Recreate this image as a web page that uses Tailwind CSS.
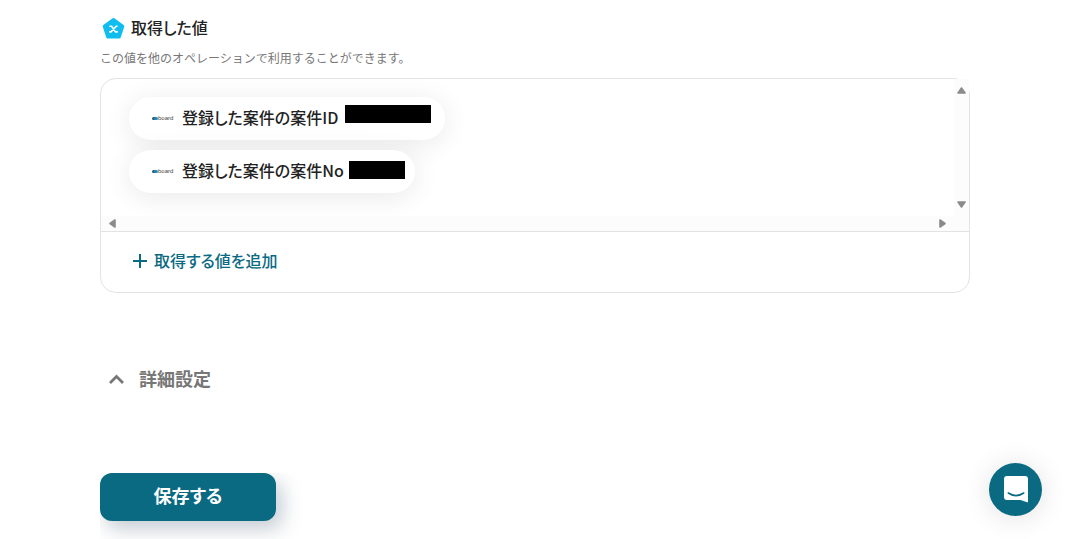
<!DOCTYPE html>
<html lang="ja">
  <head>
    <meta charset="UTF-8" />
    <meta name="viewport" content="width=device-width, initial-scale=1.0" />
    <title>取得した値</title>
    <script src="https://cdn.jsdelivr.net/npm/@tailwindcss/browser@4"></script>
  </head>
  <body class="bg-white text-[#222] font-['Noto_Sans_CJK_JP',sans-serif] overflow-hidden">
    <main class="pt-[15px] pl-[100px] pr-24">
      <section>
        <h2 class="flex items-center gap-1 pl-px text-base leading-6 font-medium [font-feature-settings:'palt']">
          <svg class="size-[26px]" viewBox="0 0 26 26" aria-hidden="true">
            <path d="M12.5 3.5 L21.8 10.2 L18.3 21 H6.7 L3.2 10.2 Z" fill="#11bdef" stroke="#11bdef" stroke-width="3" stroke-linejoin="round" />
            <path d="M8.4 10.3 H10.6 L14.4 15.9 H16.8 M16.6 10.3 H15.2 L10 15.9 H8.2" fill="none" stroke="#fff" stroke-width="1.6" stroke-linejoin="round" />
          </svg>
          <span class="pb-1">取得した値</span>
        </h2>
        <p class="mt-[7px] text-xs leading-4 text-[#777]">この値を他のオペレーションで利用することができます。</p>

        <div class="mt-3 rounded-2xl border border-[#e3e3e3]">
          <div class="grid grid-cols-[1fr_15px] grid-rows-[137px_15px] border-b border-[#e3e3e3]">
            <ul class="flex flex-col items-start gap-[10px] overflow-hidden pt-[18px] pl-7 [font-feature-settings:'palt']">
              <li class="flex h-[43px] items-center rounded-full bg-white pr-[14px] pl-[23px] shadow-[0_4px_28px_rgba(0,0,0,0.09)]">
                <svg class="mb-[2px] h-3 w-[22px]" viewBox="0 0 22 12" aria-hidden="true">
                  <rect x="0" y="5" width="4" height="3" rx="1.5" fill="#35536b" />
                  <rect x="2" y="5" width="4" height="3" rx="1.5" fill="#1c8fc0" />
                  <text x="6" y="8" font-size="6" fill="#444" font-family="Liberation Sans">board</text>
                </svg>
                <span class="ml-2 pb-1 text-base leading-6 font-medium">登録した案件の案件ID</span>
                <span class="mb-[10px] ml-[7px] h-[18px] w-[86px] bg-black"></span>
              </li>
              <li class="flex h-[43px] items-center rounded-full bg-white pr-[10px] pl-[23px] shadow-[0_4px_28px_rgba(0,0,0,0.09)]">
                <svg class="mb-[2px] h-3 w-[22px]" viewBox="0 0 22 12" aria-hidden="true">
                  <rect x="0" y="5" width="4" height="3" rx="1.5" fill="#35536b" />
                  <rect x="2" y="5" width="4" height="3" rx="1.5" fill="#1c8fc0" />
                  <text x="6" y="8" font-size="6" fill="#444" font-family="Liberation Sans">board</text>
                </svg>
                <span class="ml-2 pb-1 text-base leading-6 font-medium">登録した案件の案件No</span>
                <span class="mb-1 ml-[5px] h-[18px] w-14 bg-black"></span>
              </li>
            </ul>
            <!-- scrollbars -->
            <div class="flex flex-col items-center justify-between bg-[#fcfcfc] py-2">
              <svg class="h-[7px] w-[9px]" viewBox="0 0 9 7"><path d="M4.5 1 L8 6 H1 Z" fill="#8b8b8b" stroke="#8b8b8b" stroke-width="1.6" stroke-linejoin="round" /></svg>
              <svg class="h-[7px] w-[9px]" viewBox="0 0 9 7"><path d="M4.5 6 L8 1 H1 Z" fill="#8b8b8b" stroke="#8b8b8b" stroke-width="1.6" stroke-linejoin="round" /></svg>
            </div>
            <div class="flex items-center justify-between bg-[#fcfcfc] px-2">
              <svg class="h-[9px] w-[7px]" viewBox="0 0 7 9"><path d="M1 4.5 L6 1 V8 Z" fill="#8b8b8b" stroke="#8b8b8b" stroke-width="1.6" stroke-linejoin="round" /></svg>
              <svg class="h-[9px] w-[7px]" viewBox="0 0 7 9"><path d="M6 4.5 L1 1 V8 Z" fill="#8b8b8b" stroke="#8b8b8b" stroke-width="1.6" stroke-linejoin="round" /></svg>
            </div>
            <div class="bg-[#fcfcfc]"></div>
          </div>
          <button type="button" class="flex h-[60px] items-center gap-[7px] pl-8 text-base font-medium text-[#0a6a82] [font-feature-settings:'palt']">
            <svg class="mb-[2px] size-[14px]" viewBox="0 0 14 14" fill="none" stroke="currentColor" stroke-width="2" aria-hidden="true"><path d="M7 0V14M0 7H14" /></svg>
            <span class="pb-1">取得する値を追加</span>
          </button>
        </div>
      </section>

      <button type="button" class="mt-[71px] ml-2 flex items-center gap-[14px] text-lg leading-7 font-bold text-[#777]">
        <svg class="h-[10px] w-[17px]" viewBox="0 0 17 10" fill="none" stroke="currentColor" stroke-width="2.8" aria-hidden="true"><path d="M2 9 L8.5 2.5 L15 9" /></svg>
        <span class="pb-[2px]">詳細設定</span>
      </button>

      <!-- the shadow is cut off at the left and top of this wrapper -->
      <div class="mt-[79px] w-[206px] overflow-hidden pb-[18px]">
        <button type="submit" class="h-12 w-44 rounded-xl bg-[#0a6a82] pb-1 text-lg font-bold text-white shadow-[6px_8px_20px_rgba(20,50,80,0.25)] [font-feature-settings:'palt']">保存する</button>
      </div>
    </main>

    <button type="button" aria-label="チャットを開く" class="fixed right-6 bottom-[23px] flex size-[53px] items-center justify-center rounded-full bg-[#0a6a82] shadow-[0_2px_28px_rgba(0,0,0,0.12)]">
      <svg class="mb-px h-[27px] w-6" viewBox="0 0 24 27" aria-hidden="true">
        <path d="M3 0 H21 Q24 0 24 3 V26.5 Q20 25.3 16.5 24 H3 Q0 24 0 21 V3 Q0 0 3 0 Z" fill="#fff" />
        <path d="M4.3 17 Q12 22.3 19.7 17" fill="none" stroke="#0a6a82" stroke-width="1.6" stroke-linecap="round" />
      </svg>
    </button>
  </body>
</html>
